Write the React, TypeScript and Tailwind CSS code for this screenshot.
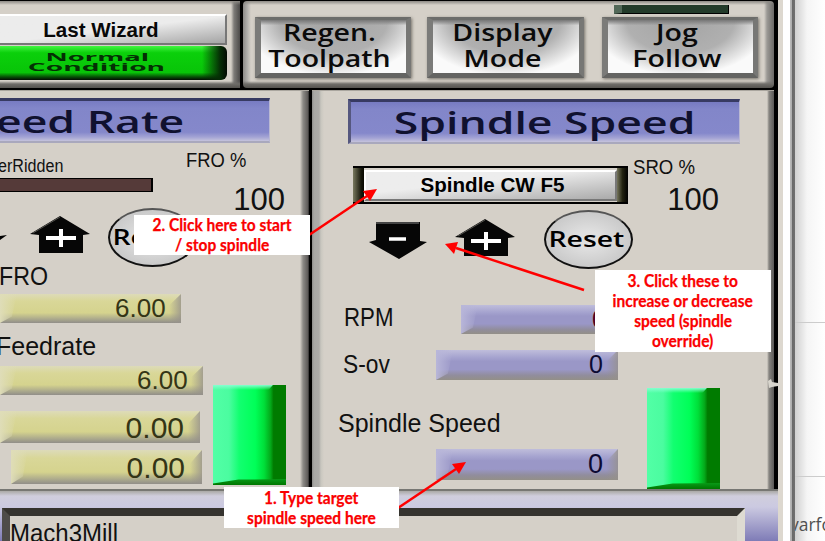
import type { ReactNode } from "react";

const arial = "font-['Liberation_Sans',Arial,sans-serif] whitespace-nowrap";
const wide = "font-['Open_Sans',sans-serif] whitespace-nowrap";

function Bar({ tone, className, children }: { tone: "blue" | "yellow"; className: string; children?: ReactNode }) {
  const skin =
    tone === "blue"
      ? "bg-[linear-gradient(180deg,#bfbddb_0%,#a5a3cf_25%,#9a97c7_38%,#9a97c7_65%,#918d9d_84%,#938f88_100%)] text-[#0d0a32]"
      : "bg-[linear-gradient(180deg,#dddbb9_0%,#d9d798_24%,#d5d38e_65%,#aaa88c_87%,#918e89_100%)] text-[#343516]";
  return (
    <div className={`relative flex shrink-0 items-center justify-end overflow-hidden ${skin} ${arial} ${className}`}>
      <div className={`absolute inset-y-0 left-0 w-[17px] [clip-path:polygon(0_0,100%_0,70%_78%,0_100%)] ${tone === "blue" ? "bg-linear-to-r from-[#b8b6d9] to-transparent" : "bg-linear-to-r from-[#dfddb8] to-transparent"}`} />
      <div className="absolute inset-y-0 right-0 w-[12px] bg-linear-to-r from-transparent to-[#96918bcc] [clip-path:polygon(100%_0,100%_100%,0_100%,0_40%)]" />
      <span className="relative">{children}</span>
    </div>
  );
}

function MetalButton({ lines, className }: { lines: string[]; className: string }) {
  return (
    <div className={`flex h-[61px] shrink-0 flex-col items-center border-t-[3px] border-r-[5px] border-b-[5px] border-l-[6px] border-t-[#6c6c6a] border-r-[#777775] border-b-[#646462] border-l-[#7b7b79] bg-[linear-gradient(180deg,#777_0%,transparent_10%),radial-gradient(ellipse_62%_105%_at_50%_0%,#a3a3a3_0%,#b0b0b0_60%,#fafafa_100%)] pr-[8px] shadow-[1px_1px_3px_#77736a] ${wide} ${className}`}>
      {lines.map((line) => (
        <span key={line} className="-mt-px mb-px h-[26px] scale-x-[1.24] text-[23px] leading-[27px] font-semibold text-[#0b0b0b]">{line}</span>
      ))}
    </div>
  );
}

function Title({ className, children }: { className: string; children: ReactNode }) {
  return (
    <div className={`flex h-[45px] shrink-0 items-center border-t-[3px] border-r border-b-2 border-t-[#373a62] border-r-[#b9b8d2] border-b-[#a9a8bd] bg-[linear-gradient(180deg,#777bc2_0%,#8286c9_18%,#8588cb_78%,#a3a3d4_90%,#c5c3dc_100%)] ${wide} text-[30px] font-semibold text-[#10112f] ${className}`}>
      {children}
    </div>
  );
}

function GreenLamp({ className }: { className: string }) {
  return (
    <div className={`relative w-[73px] shrink-0 bg-[linear-gradient(90deg,#52ffa6_0%,#4bfca0_22%,#12ff70_36%,#00ff58_58%,#00df39_70%,#04a819_79%,#007b00_83%)] ${className}`}>
      <div className="absolute inset-x-0 top-0 h-[5px] bg-linear-to-b from-[#86ffd0] to-transparent [clip-path:polygon(0_0,82%_0,76%_100%,0_100%)]" />
      <div className="absolute inset-x-0 bottom-0 h-[6px] bg-linear-to-b from-[#0a9a18] to-[#007600] [clip-path:polygon(0_75%,35%_10%,100%_0,100%_100%,0_100%)]" />
    </div>
  );
}

function UpArrow({ className }: { className: string }) {
  return (
    <svg viewBox="0 0 60 38" className={`h-[38px] w-[60px] shrink-0 ${className}`}>
      <path d="M30 0 60 18 53 19V37H9V19L0 18Z" fill="#060606" />
      <path d="M30 1 3 17" stroke="#55544f" />
      <path d="M16 22H46M31 13V31" stroke="#fff" strokeWidth="4" />
    </svg>
  );
}

function DownArrow({ className }: { className: string }) {
  return (
    <svg viewBox="0 0 60 38" className={`h-[38px] w-[60px] shrink-0 ${className}`}>
      <path d="M8 0H52V19L59 20 31 37 1 20 8 18Z" fill="#060606" />
      <path d="M8 1H51" stroke="#444" strokeWidth="2" />
      <path d="M21 17H38" stroke="#fff" strokeWidth="3.5" />
    </svg>
  );
}

function ResetButton({ className }: { className: string }) {
  return (
    <div className={`flex h-[59px] w-[89px] shrink-0 items-center justify-center rounded-[50%] border-[2.5px] border-[#111] border-t-[#555] bg-[radial-gradient(ellipse,#e0e0e0_20%,#bdbdbd_100%)] ${wide} ${className}`}>
      <span className="-mt-[4px] -ml-[4px] scale-x-[1.29] text-[22px] leading-none font-semibold text-black">Reset</span>
    </div>
  );
}

function Callout({ className, lines }: { className: string; lines: string[] }) {
  return (
    <div className={`absolute flex flex-col items-center bg-white font-['Lato',sans-serif] text-[16.5px] leading-[21px] font-bold whitespace-nowrap text-[#fa0000] ${className}`}>
      {lines.map((l) => <span key={l} className="h-[20px] scale-x-[.94] [-webkit-text-stroke:0.25px_#fa0000]">{l}</span>)}
    </div>
  );
}

function TopBar() {
  return (
    <div className="flex h-[90px] shrink-0 border-t border-b-2 border-black bg-black">
      <div className="flex h-[87px] w-[240px] flex-col bg-[linear-gradient(180deg,#8c8984_0,transparent_4px,transparent_80px,#6f6d69_83px,#55534f_87px),linear-gradient(90deg,#d5d0c8_231px,#7d7b78_234px,#4c4a49_240px)] pt-[13px]">
        <div className={`flex h-[31px] w-[227px] items-center justify-center border-t-2 border-r-2 border-b-2 border-t-white border-r-[#777] border-b-[#777] bg-linear-to-br from-[#ececec] from-50% to-[#a5a5a5] pr-[24px] ${arial} text-[21px] font-bold text-[#080808]`}>
          <span className="scale-x-[.98]">Last Wizard</span>
        </div>
        <div className={`mt-px flex h-[34px] w-[227px] flex-col items-center overflow-hidden rounded-r-[6px] bg-[linear-gradient(90deg,transparent_89%,#052c05_97%,#020a02_100%),linear-gradient(180deg,#42f542_0%,#0bd00b_20%,#08c408_78%,#064e06_91%,#020c02_100%)] pt-[6px] pr-[33px] ${wide} text-[15px] font-bold text-[#043004]`}>
          <span className="h-[10px] scale-x-[1.83] scale-y-[.68] leading-[10px]">Normal</span>
          <span className="h-[10px] scale-x-[1.88] scale-y-[.68] leading-[10px]">Condition</span>
        </div>
      </div>
      <div className="ml-[3px] h-[87px] w-[531px] rounded-[4px] bg-[linear-gradient(180deg,#8c8984_0,transparent_4px,transparent_80px,#6f6d69_83px,#55534f_87px),linear-gradient(90deg,#8d8b88_0,#aeaca9_4px,#d5d0c8_8px,#d5d0c8_521px,#9b9995_524px,#6b6966_531px)]">
        <div className="flex pt-[16px] pl-[12px]">
          <MetalButton className="w-[156px]" lines={["Regen.", "Toolpath"]} />
          <MetalButton className="ml-[16px] w-[157px]" lines={["Display", "Mode"]} />
          <div className="relative ml-[18px]">
            <div className="absolute -top-[12px] left-[12px] h-[9px] w-[115px] border-r border-b border-l-[8px] border-black border-l-[#526858] bg-[#233b2a]" />
            <MetalButton className="w-[156px]" lines={["Jog", "Follow"]} />
          </div>
        </div>
      </div>
    </div>
  );
}

function FeedPanel() {
  return (
    <div className="flex w-[309px] shrink-0 flex-col border-t border-[#aaa69f] bg-[linear-gradient(90deg,#d5d0c8_300px,#8d8b87_303px,#5c5957_308px,#222_309px)] pt-[7px] text-[#111]">
      <Title className="w-[270px]"><span className="-ml-[4px] origin-left scale-x-[1.485]">eed Rate</span></Title>
      <div className={`flex h-[63px] shrink-0 ${arial}`}>
        <div className="w-[153px] pt-[14px]">
          <div className="-ml-[2px] h-[21px] origin-left scale-x-[.92] text-[17.5px] leading-[18px]">erRidden</div>
          <div className="h-[14px] border-t border-r-2 border-b border-black bg-[#553a39]" />
        </div>
        <div className="w-[132px] pt-[7px]">
          <div className="ml-[33px] origin-left scale-x-[.92] text-[20px] leading-[20px]">FRO %</div>
          <div className="mt-[15px] text-right text-[31px] leading-[30px]">100</div>
        </div>
      </div>
      <div className="flex h-[60px] shrink-0 items-start">
        <svg viewBox="0 0 7 5" className="mt-[29px] h-[5px] w-[7px]"><path d="M0 1 7 0 0 5Z" /></svg>
        <UpArrow className="mt-[10px] ml-[23px]" />
        <ResetButton className="mt-[2px] ml-[18px]" />
      </div>
      <div className={`flex ${arial} text-[25px]`}>
        <div className="w-[203px]">
          <div className="-ml-px h-[20px] origin-left scale-x-[.93] leading-[20px]">FRO</div>
          <Bar tone="yellow" className="mt-[8px] h-[29px] w-[181px] pr-[15px]"><span className="inline-block origin-right scale-x-[1.04]">6.00</span></Bar>
          <div className="mt-[13px] -ml-[4px] h-[20px] leading-[20px]">Feedrate</div>
          <Bar tone="yellow" className="mt-[10px] h-[29px] w-[203px] pr-[15px]"><span className="inline-block origin-right scale-x-[1.04]">6.00</span></Bar>
          <Bar tone="yellow" className="mt-[16px] h-[32px] w-[200px] pr-[16px] text-[30px]">0.00</Bar>
          <Bar tone="yellow" className="mt-[7px] ml-[11px] h-[34px] w-[191px] pr-[17px] text-[30px]">0.00</Bar>
        </div>
        <GreenLamp className="mt-[119px] ml-[10px] h-[100px]" />
      </div>
    </div>
  );
}

function SpindlePanel() {
  return (
    <div className="ml-[3px] flex w-[462px] shrink-0 flex-col border-t border-[#aaa69f] bg-[linear-gradient(90deg,#8d8d8b_0,#a8a8a5_2px,#adaca9_7px,#c9c7bf_9px,#d5d0c8_12px,#d5d0c8_455px,#878581_457px,#5a5856_462px)] px-[7px] pt-[8px] text-[#111]">
      <Title className="ml-[29px] w-[392px] justify-center border-l-[3px] border-l-[#55577f]"><span className="scale-x-[1.485]">Spindle Speed</span></Title>
      <div className={`flex h-[63px] shrink-0 ${arial}`}>
        <div className="mt-[22px] ml-[34px] h-[38px] w-[275px] border-t-2 border-b-2 border-black bg-[linear-gradient(90deg,#79795f_0%,#17170b_3%,#090900_4%,#d5d0c8_4%,#d5d0c8_96%,#73735a_96%,#222210_98%,#000_100%)] px-[11px] pt-[2px]">
          <div className="flex h-[31px] items-center justify-center border-2 border-t-white border-r-[#777] border-b-[#777] border-l-white bg-linear-to-br from-[#ededed] from-40% to-[#aaa] pb-[2px] pl-[3px] text-[21px] font-bold text-black"><span className="scale-x-[.98]">Spindle CW F5</span></div>
        </div>
        <div className="ml-[5px] w-[86px] pt-[13px]">
          <div className="origin-left scale-x-[.93] text-[20px] leading-[20px]">SRO %</div>
          <div className="mt-[8px] text-right text-[31px] leading-[30px]">100</div>
        </div>
      </div>
      <div className="flex h-[62px] shrink-0 items-start">
        <DownArrow className="mt-[15px] ml-[49px]" />
        <UpArrow className="mt-[12px] ml-[27px]" />
        <ResetButton className="mt-[3px] ml-[29px]" />
      </div>
      <div className={`flex ${arial} text-[25px]`}>
        <div className="w-[299px] pt-[36px]">
          <div className="flex h-[29px] items-center justify-between pl-[25px]">
            <span className="-mt-[4px] origin-left scale-x-[.89]">RPM</span>
            <Bar tone="blue" className="h-[29px] w-[157px] pr-[12px] text-[#500020]">0</Bar>
          </div>
          <div className="mt-[16px] flex h-[30px] items-center justify-between pl-[24px]">
            <span className="origin-left scale-x-[.91]">S-ov</span>
            <Bar tone="blue" className="h-[30px] w-[182px] pr-[15px]">0</Bar>
          </div>
          <div className="mt-[33px] h-[20px] pl-[19px] leading-[20px]">Spindle Speed</div>
          <Bar tone="blue" className="mt-[16px] ml-[117px] h-[31px] w-[182px] pr-[15px] text-[27px]">0</Bar>
        </div>
        <GreenLamp className="mt-[119px] ml-[29px] h-[101px]" />
      </div>
    </div>
  );
}

function Footer() {
  return (
    <div className="flex h-[52px] shrink-0 flex-col border-t-2 border-[#777773] bg-[linear-gradient(180deg,#aaa9a6_0,#d0cedd_5px,#cbc9e1_16px,#7a77b4_52px)] pt-[17px]">
      <div className={`ml-[2px] h-[40px] w-[743px] border-t-[8px] border-r-[8px] border-l-[8px] border-t-[#35332f] border-r-[#dedbd2] border-l-[#4e4c49] bg-[#d5d0c8] pt-[5px] ${arial} text-[25px] leading-[25px] text-[#111]`}>
        <div className="origin-left scale-x-[.96]">Mach3Mill</div>
      </div>
    </div>
  );
}

export default function App() {
  return (
    <div className="relative flex h-[541px] w-[825px] overflow-hidden bg-white">
      <div className="flex w-[778px] shrink-0 flex-col bg-black">
        <TopBar />
        <div className="flex h-[399px] shrink-0">
          <FeedPanel />
          <SpindlePanel />
        </div>
        <Footer />
      </div>
      <div className="w-[17px] shrink-0 bg-[linear-gradient(90deg,#ddd8cf_0,#ddd8cf_5px,#fff_5px,#fff_12px,#bbb_12px,#aaa_14px,#686868_14px,#707070_17px)]" />
      <div className="flex w-[30px] shrink-0 flex-col overflow-hidden bg-linear-to-r from-[#d0d0d0] via-[#f5f5f5] via-40% to-white">
        <div className="h-[323px] border-b border-[#ccc]" />
        <div className="h-[154px] border-b border-[#ccc]" />
        <div className="-ml-[5px] pt-[35px] font-['Open_Sans',sans-serif] text-[17.5px] leading-[24px] text-[#505050]">varfo</div>
      </div>
      <svg viewBox="0 0 12 12" className="absolute top-[378px] left-[767px] h-[12px] w-[12px]"><path d="M1 3 4 1 5 4 11 5 11 8 5 9 2 10Z" fill="#d8d5cd" /></svg>
      <svg viewBox="0 0 825 541" className="absolute inset-0 h-[541px] w-[825px]">
        <g stroke="#f00" strokeWidth="2.5">
          <path d="M309 235 367 196" />
          <path d="M584 290 456 248" />
          <path d="M398 508 456 469" />
        </g>
        <g fill="#f00">
          <path d="M377 189 370 201 363 191Z" />
          <path d="M445 244 458 242 454 254Z" />
          <path d="M466 462 459 474 452 464Z" />
        </g>
      </svg>
      <Callout className="top-[215px] left-[134px] h-[40px] w-[176px]" lines={["2. Click here to start", "/ stop spindle"]} />
      <Callout className="top-[270px] left-[595px] h-[82px] w-[176px] pt-[1px]" lines={["3. Click these to", "increase or decrease", "speed (spindle", "override)"]} />
      <Callout className="top-[487px] left-[224px] h-[41px] w-[175px] pt-[1px]" lines={["1. Type target", "spindle speed here"]} />
    </div>
  );
}
